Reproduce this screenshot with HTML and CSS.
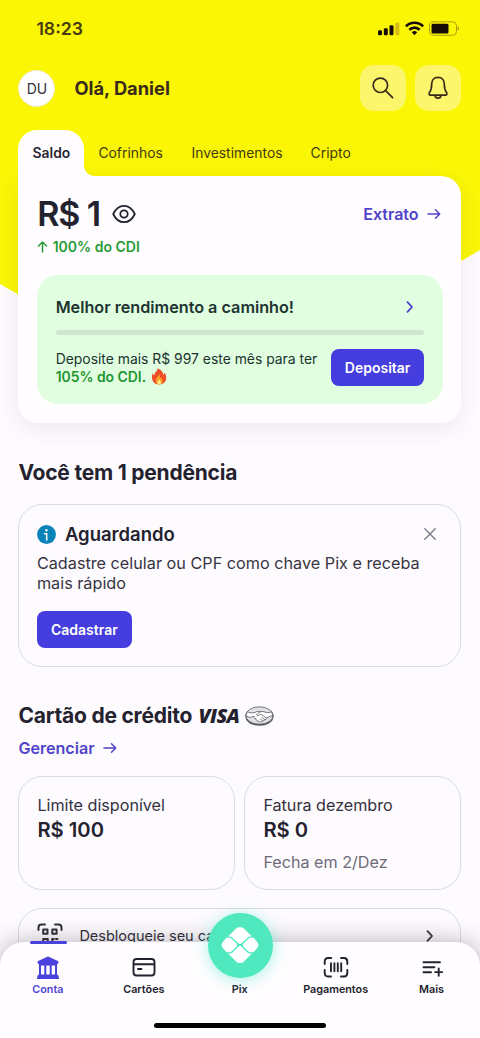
FILE: index.html
```html
<!DOCTYPE html>
<html lang="pt-BR">
<head>
<meta charset="utf-8">
<title>Conta</title>
<link rel="stylesheet" href="styles.css">
</head>
<body>
<div class="app">
  <div class="status">
    <span class="clock">18:23</span>
    <svg class="signals" width="84" height="18" viewBox="0 0 84 18">
      <rect x="1" y="11.200" width="4" height="5" rx="1.200"/><rect x="6.800" y="9.200" width="4" height="7" rx="1.200"/><rect x="12.500" y="6.200" width="4" height="10" rx="1.200"/><rect class="dim" x="18.300" y="3.700" width="4" height="12.500" rx="1.200"/>
      <path class="arc" d="M28.900 7.400a12 12 0 0 1 17.200 0M32.400 10.800a7.200 7.200 0 0 1 10.200 0"/>
      <path d="M34.800 13.200a4 4 0 0 1 5.400 0L37.500 16.200z"/>
      <rect class="shell" x="52.500" y="2.800" width="27" height="13.500" rx="3.800"/><rect x="54.500" y="4.700" width="17" height="9.800" rx="1.500"/><path class="tip" d="M80.700 7.300v4.500q1.300-.6 1.300-2.200T80.700 7.300z"/>
    </svg>
  </div>
  <header class="greeting">
    <div class="avatar">DU</div>
    <h1 class="hello">Olá, Daniel</h1>
    <button class="tool" aria-label="Buscar"><svg width="24" height="24" viewBox="0 0 24 24"><circle cx="9.400" cy="9.300" r="7.200"/><path d="M14.600 14.600l7 7"/></svg></button>
    <button class="tool" aria-label="Avisos"><svg width="24" height="24" viewBox="0 0 24 24"><path d="M12 1.300c-4 0-6.300 2.900-6.300 6.700 0 4.500-.6 6.300-2.100 8.300-1 1.300-.5 2.800.9 2.800h15c1.400 0 1.900-1.500.9-2.800C18.900 14.300 18.300 12.500 18.300 8c0-3.800-2.300-6.700-6.300-6.700z"/><path d="M9 19.500c.2 3.500 5.800 3.500 6 0"/></svg></button>
  </header>
  <nav class="tabs">
    <a class="tab active">Saldo</a><a class="tab cof">Cofrinhos</a><a class="tab inv">Investimentos</a><a class="tab cri">Cripto</a>
  </nav>
  <section class="balance">
    <div class="balance-row">
      <strong class="amount">R$ 1</strong>
      <svg class="eye" width="24" height="20" viewBox="0 0 24 20"><path d="M1.200 10C3.500 5 7 1.800 12 1.800S20.500 5 22.800 10c-2.300 5-5.800 8.200-10.800 8.200S3.500 15 1.200 10z"/><circle cx="12" cy="10" r="3.700"/></svg>
      <a class="link">Extrato <svg class="arrow" width="14" height="12" viewBox="0 0 14 12"><path d="M1 6h11.500M8.500 1.800L12.700 6l-4.200 4.200"/></svg></a>
    </div>
    <div class="yield"><svg width="11" height="12" viewBox="0 0 11 12"><path d="M5.500 11V1.500M1.500 5l4-4 4 4"/></svg><span>100% do CDI</span></div>
    <div class="offer">
      <div class="offer-head"><span>Melhor rendimento a caminho!</span><svg class="chev" width="8" height="12" viewBox="0 0 8 12"><path d="M1.500 1.200L6 6l-4.500 4.800"/></svg></div>
      <div class="meter"></div>
      <div class="offer-body">
        <p>Deposite mais R$ 997 este mês para ter <b>105% do CDI.</b>
          <svg class="fire" width="16" height="17" viewBox="0 0 16 17"><path class="f1" d="M6.500.5c.3 3-3.300 4-3.300 7-1-.5-1.200-1.500-1.200-2.500C.2 7.500 0 16.500 8 16.500c8.500 0 8.300-8.500 5.500-12-.1 1.300-.4 2-1.300 2.500.5-2.500-3-6.300-5.700-6.500z"/><path class="f2" d="M8.200 5.800c.4 2-3.500 3.500-3.500 6.700 0 2.500 1.500 4 3.500 4s3.700-1.500 3.500-4c-.1-1.700-.9-2-1.100-3.500-.5 1-.8 1.300-1.500 1.600.2-1.900.1-3.300-.9-4.800z"/><path class="f3" d="M8.200 11c.1 1.200-1.700 1.700-1.700 3.500 0 1.200.7 2 1.700 2s1.800-.8 1.800-2c0-1.500-1.200-1.500-1.800-3.500z"/></svg></p>
        <button class="btn">Depositar</button>
      </div>
    </div>
  </section>
  <h2 class="title pending-title">Você tem 1 pendência</h2>
  <section class="notice">
    <div class="notice-head">
      <svg width="19" height="19" viewBox="0 0 19 19"><circle class="info" cx="9.500" cy="9.500" r="9.400"/><circle class="dot" cx="9.400" cy="5.200" r="1.200"/><path class="stem" d="M7.500 8.700h2.200V15"/></svg>
      <h3>Aguardando</h3>
      <svg class="close" width="12" height="12" viewBox="0 0 12 12"><path d="M.8.800l10.400 10.400M11.200.800L.8 11.200"/></svg>
    </div>
    <p>Cadastre celular ou CPF como chave Pix e receba<br>mais rápido</p>
    <button class="btn">Cadastrar</button>
  </section>
  <div class="credit-head">
    <h2 class="title">Cartão de crédito</h2>
    <span class="visa">VISA</span>
    <svg class="shake" width="29" height="20" viewBox="0 0 29 20"><ellipse class="base" cx="14.500" cy="10.800" rx="14" ry="9"/><ellipse class="face" cx="14.500" cy="9.500" rx="13.700" ry="8.700"/><path class="hands" d="M2.500 5.800c3.500 1.700 5.800 1.400 8.500.2 1.500-.7 2.800-.8 4.200-.2 2.800-1 4.300.3 6.300.7 2 .3 3.300 0 5-.8l1.300 4.100q-3.300.2-6.300 2.300c0 1.300-.9 1.700-1.800 1.500-.3 1.300-1.300 1.400-2 1.100-.4 1-1.500 1.200-2.200.7-.7 1-2 .7-2.200-.4-1 .3-1.600-.4-1.500-1.200-1.100.1-1.700-.6-1.400-1.500-1.200-.2-1.700-.9-1.200-1.700-1.900-.3-3 .4-4.400 1L1.200 10z"/><path d="M15.200 5.800L11.500 8.700c.8 1.300 2.700.7 4.300-.6l5.700 4M17 11.500l2.700 2.200M15.500 13l2 1.700"/></svg>
  </div>
  <a class="link manage">Gerenciar <svg class="arrow" width="14" height="12" viewBox="0 0 14 12"><path d="M1 6h11.500M8.500 1.800L12.700 6l-4.200 4.200"/></svg></a>
  <div class="cards">
    <div class="card"><span>Limite disponível</span><strong>R$ 100</strong></div>
    <div class="card"><span>Fatura dezembro</span><strong>R$ 0</strong><small>Fecha em 2/Dez</small></div>
  </div>
  <div class="unlock">
    <svg class="qr" width="26" height="26" viewBox="0 0 26 26"><path d="M1.500 7V4.500q0-3 3-3H8M18 1.500h3.500q3 0 3 3V7M6.200 6.500h4.300v4.300H6.200zM15.300 6.500h4.300v4.300h-4.300zM6.200 16h4.500v4.500H6.200zM15.300 19v-3h1.500M19 16h1.500"/></svg>
    <span>Desbloqueie seu cartão</span>
    <svg class="chev" width="8" height="12" viewBox="0 0 8 12"><path d="M1.500 1.200L6 6l-4.500 4.800"/></svg>
  </div>
  <nav class="dock">
    <a class="item current"><svg width="26" height="24" viewBox="0 0 26 24"><path d="M2.500 5.300L13 .5l10.500 4.800q.3 2.200-1.500 3.200v10q2 .7 2 4.500H2q0-3.800 2-4.500v-10Q2.200 7.500 2.500 5.300z"/><path class="gap" d="M6 9.500h3.300v9H6zM11.300 9.500h3.400v9h-3.400zM16.700 9.500H20v9h-3.300z"/></svg><span>Conta</span></a>
    <a class="item"><svg width="26" height="24" viewBox="0 0 26 24"><path d="M5.500 3h15q3 0 3 3v10.500q0 3-3 3h-15q-3 0-3-3V6q0-3 3-3zM2.500 8.200h21M7 13h3.500"/></svg><span>Cartões</span></a>
    <a class="item"><span class="pix-label">Pix</span></a>
    <a class="item"><svg width="26" height="24" viewBox="0 0 26 24"><path d="M1.700 8V5.500q0-3.500 3.500-3.500h3M18 2h3q3.300 0 3.300 3.500V8M24.300 14v3q0 3.500-3.300 3.500h-3M8 20.500H5.200q-3.500 0-3.500-3.500v-3M8 7.300v8M11.400 7.300v8M14.800 7.300v8M18.200 7.300v8"/></svg><span>Pagamentos</span></a>
    <a class="item"><svg width="26" height="24" viewBox="0 0 26 24"><path d="M4.500 6.300h16.500M4.500 11.300h11M4.500 16.200h7.500M19.700 12.500v7.200M16.100 16.100h7.200"/></svg><span>Mais</span></a>
    <div class="indicator"></div>
    <div class="home"></div>
    <div class="pix"><svg width="38" height="38" viewBox="0 0 40 40"><path d="M7.500 11 15.500 3q4.500-4 9 0l8 8h-1.500q-2 0-3.500 1.500l-5.500 5.500q-2 1.800-4 0l-5.500-5.500Q11 11 9 11zM7.500 29l8 8q4.500 4 9 0l8-8H31q-2 0-3.500-1.500L22 22q-2-1.800-4 0l-5.500 5.500Q11 29 9 29zM5.800 12.400l-3.300 3.600q-3.800 4 0 8l3.300 3.600H9q1.300 0 2.300-1l4.900-4.800q1.700-1.800 0-3.600l-4.900-4.800q-1-1-2.300-1zM34.200 12.400l3.300 3.600q3.800 4 0 8l-3.300 3.600H31q-1.300 0-2.300-1l-4.900-4.800q-1.700-1.800 0-3.600l4.900-4.800q1-1 2.300-1z"/></svg></div>
  </nav>
</div>
</body>
</html>
```
FILE: styles.css
```css
* { box-sizing: border-box; }
body { margin: 0; font-family: Inter, "Liberation Sans", sans-serif; color: #24222e; }
h1, h2, h3, p { margin: 0; }
svg { display: block; flex: none; fill: none; stroke: currentColor; stroke-linecap: round; stroke-linejoin: round; }
button { font: inherit; border: 0; padding: 0; display: flex; align-items: center; justify-content: center; }
.app { position: relative; z-index: 0; width: 480px; height: 1038px; overflow: hidden; background: #fefbff; padding: 0 18.600px 0 18.400px; }
.app::before { content: ""; position: absolute; z-index: -1; inset: 0 0 auto; height: 430px; background: #faf606; clip-path: polygon(0 0, 100% 0, 100% 250px, 240px 391px, 221px 412px, 0 284px); }
.status { height: 65px; padding: 19px 0 0 18px; display: flex; justify-content: space-between; color: #493b12; }
.clock { font-size: 17.700px; line-height: 20px; font-weight: 600; }
.signals { fill: #160b08; stroke: none; margin-right: 0; }
.signals .dim { fill: #d4bd13; }
.signals .arc { fill: none; stroke: #160b08; stroke-width: 2.700; stroke-linecap: butt; }
.signals .shell { fill: none; stroke: #ada010; }
.signals .tip { fill: #9b8f12; }
.greeting { display: flex; align-items: center; height: 46px; color: #392a1b; }
.avatar { width: 37px; height: 37px; border-radius: 50%; border: 1px solid #f2ead0; background: #fff; display: grid; place-items: center; font-size: 14px; color: #35303b; }
.hello { margin-left: 19px; font-size: 18.300px; font-weight: 680; flex: 1; }
.tool { width: 46px; height: 46px; margin-left: 9.500px; border-radius: 14px; background: #fcf66c; color: #392a1b; }
.tool svg { stroke-width: 1.700; }
.tabs { display: flex; height: 65px; padding-top: 18.500px; color: #453914; font-size: 13.900px; line-height: 46px; }
.tab.active { width: 66px; background: #fffdff; border-radius: 19px 19px 0 0; text-align: center; color: #292732; font-weight: 600; position: relative; }
.tab.active::after { content: ""; position: absolute; left: 100%; bottom: 0; width: 10px; height: 10px; background: radial-gradient(circle at 100% 0, transparent 9.500px, #fffdff 10px); }
.cof { margin-left: 14px; }
.inv { margin-left: 28.500px; }
.cri { margin-left: 28px; }
.balance { height: 247px; background: #fffdff; border-radius: 0 20px 20px 20px; padding: 20px 18.800px 19px; box-shadow: 0 6px 22px rgba(55, 40, 80, .09); }
.balance-row { display: flex; align-items: center; height: 36px; }
.amount { font-size: 34px; line-height: 36px; font-weight: 600; letter-spacing: -1.100px; }
.eye { margin-left: 12px; stroke-width: 1.800; }
.link { display: flex; align-items: center; gap: 8px; color: #5143c9; font-size: 16px; line-height: 20px; font-weight: 600; }
.balance .link { margin-left: auto; margin-right: 2px; }
.arrow { stroke-width: 1.500; }
.yield { display: flex; align-items: center; gap: 4.500px; height: 18px; margin-top: 5.500px; color: #279b36; font-size: 14px; font-weight: 600; }
.yield svg { stroke-width: 1.500; }
.offer { height: 129px; margin-top: 19.500px; border-radius: 21px; background: #e1ffe0; padding: 22px 18.500px 0; color: #203330; }
.offer-head { display: flex; align-items: center; justify-content: space-between; font-size: 16.200px; line-height: 20px; font-weight: 600; padding-right: 10px; }
.chev { stroke-width: 1.800; }
.offer .chev { color: #4a3fc8; }
.meter { height: 5px; margin-top: 13px; border-radius: 2px; background: #cee6cf; }
.offer-body { display: flex; justify-content: space-between; margin-top: 14px; font-size: 13.900px; line-height: 17.500px; }
.offer-body p { width: 265px; padding-top: 1.500px; }
.offer-body b { color: #1e9530; font-weight: 600; }
.fire { display: inline-block; margin-left: 1px; vertical-align: -3px; stroke: none; }
.f1 { fill: #ef4c28; } .f2 { fill: #ff9d25; } .f3 { fill: #ffe985; }
.btn { height: 37px; border-radius: 8px; background: #453ddd; color: #fff; font-size: 14px; font-weight: 600; }
.offer-body .btn { width: 93px; }
.title { font-size: 21px; line-height: 28px; font-weight: 650; letter-spacing: -.22px; }
.pending-title { margin-top: 36px; }
.notice { height: 163px; margin-top: 16.500px; border: 1px solid #dcdae2; border-radius: 24px; padding: 18.500px 18px 0 17.500px; }
.notice-head { display: flex; align-items: center; height: 22px; }
.notice h3 { margin-left: 9px; font-size: 18.500px; font-weight: 640; line-height: 22px; flex: 1; }
.info { fill: #0c83b8; stroke: none; }
.dot { fill: #fff; stroke: none; }
.stem { stroke: #fff; stroke-width: 1.500; }
.close { margin-right: 6px; color: #7b7787; stroke-width: 1.300; }
.notice p { margin-top: 7.500px; font-size: 16.230px; line-height: 20px; color: #373441; white-space: nowrap; }
.notice .btn { width: 95px; margin-top: 18px; }
.credit-head { display: flex; align-items: center; margin-top: 35.500px; height: 28px; }
.visa { margin-left: 6.500px; width: 42px; font: italic 800 19.800px/20px "Open Sans", sans-serif; letter-spacing: -.7px; }
.shake { margin-left: 4px; stroke-width: .8; color: #595760; }
.base { fill: #55535d; stroke: none; }
.face { fill: #e3e1e6; }
.hands { fill: #fff; }
.manage { margin-top: 7.500px; }
.manage.link { font-size: 16.100px; }
.cards { display: grid; grid-template-columns: 1fr 1fr; gap: 9px; margin-top: 18px; }
.card { height: 114px; border: 1px solid #dcdae2; border-radius: 24px; padding: 17px 18px; display: flex; flex-direction: column; color: #34313e; font-size: 16.150px; line-height: 22px; }
.card strong { font-size: 20.200px; line-height: 28px; font-weight: 600; color: #24222e; }
.card small { margin-top: 7px; font-size: 16.150px; line-height: 22px; color: #6d6a77; }
.unlock { display: flex; align-items: flex-start; height: 60px; margin-top: 18px; border: 1px solid #dcdae2; border-radius: 24px; padding: 14px 26px 0 18px; font-size: 14px; line-height: 26px; color: #34313e; }
.unlock span { margin-left: 16px; font-size: 14.500px; }
.unlock .chev { margin: 7px 0 0 auto; }
.qr { stroke-width: 2; }
.dock { position: absolute; left: 0; right: 0; bottom: 0; height: 96px; background: #fffdff; border-radius: 24px 24px 0 0; box-shadow: 0 0 24px rgba(25, 22, 30, .32); display: grid; grid-template-columns: repeat(5, 95.900px); padding-top: 13.500px; }
.item { display: flex; flex-direction: column; align-items: center; height: 41.500px; justify-content: space-between; font-size: 10.800px; line-height: 14px; font-weight: 600; color: #24222e; }
.item svg { stroke-width: 1.900; }
.current { color: #5146d4; }
.current svg { fill: #4b41dd; stroke: none; }
.current .gap { fill: #fffdff; }
.pix-label { margin-top: auto; }
.indicator { position: absolute; left: 30px; top: -1px; width: 37px; height: 3px; border-radius: 2px; background: #4b41dd; }
.home { position: absolute; left: 154px; bottom: 10px; width: 172px; height: 5.500px; border-radius: 3px; background: #020202; }
.pix { position: absolute; left: 207.500px; top: -29.500px; width: 65px; height: 65px; border-radius: 50%; background: #4fe8bf; box-shadow: 0 2px 15px rgba(79, 232, 205, .5); display: grid; place-items: center; }
.pix svg { fill: #fff; stroke: none; }
```
